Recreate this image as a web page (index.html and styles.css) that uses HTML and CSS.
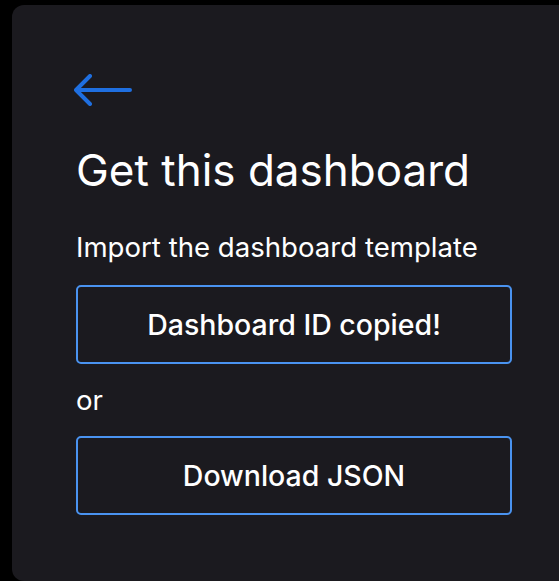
FILE: index.html
```html
<!DOCTYPE html>
<html>
<head>
<meta charset="utf-8">
<link rel="stylesheet" href="styles.css">
</head>
<body>
<div class="panel">
  <svg class="back" width="58" height="32" viewBox="0 0 58 32">
    <path d="M2 16 H56 M16 2 L2 16 L16 30" fill="none" stroke="#1f6fe0" stroke-width="4" stroke-linecap="round" stroke-linejoin="round"/>
  </svg>
  <h1 class="title">Get this dashboard</h1>
  <p class="sub">Import the dashboard template</p>
  <button class="btn">Dashboard ID copied!</button>
  <p class="or">or</p>
  <button class="btn">Download JSON</button>
</div>
</body>
</html>
```
FILE: styles.css
```css
html, body {
  margin: 0;
  padding: 0;
  background: #000;
}
body {
  padding: 5px 0 0 12px;
  font-family: Inter, "Noto Sans", sans-serif;
  color: #fff;
}
.panel {
  background: #1b1a1f;
  border-radius: 12px 0 0 12px;
  height: 576px;
  box-sizing: border-box;
  padding: 69px 47px 0 64px;
  display: flex;
  flex-direction: column;
  align-items: stretch;
}
.back {
  display: block;
  margin-left: -2px;
}
.title {
  margin: 38px 0 0;
  font-size: 44px;
  font-weight: 400;
  line-height: 52px;
}
.sub {
  margin: 33px 0 0;
  font-size: 27.6px;
  line-height: 36px;
}
.btn {
  margin: 20px 0 0;
  height: 79px;
  background: transparent;
  border: 2px solid #4a93f0;
  border-radius: 5px;
  color: #fff;
  font-family: inherit;
  font-size: 28.5px;
  font-weight: 500;
}
.or {
  margin: 18px 0 0;
  font-size: 27.6px;
  line-height: 36px;
}
.or + .btn {
  margin-top: 18px;
}
```
